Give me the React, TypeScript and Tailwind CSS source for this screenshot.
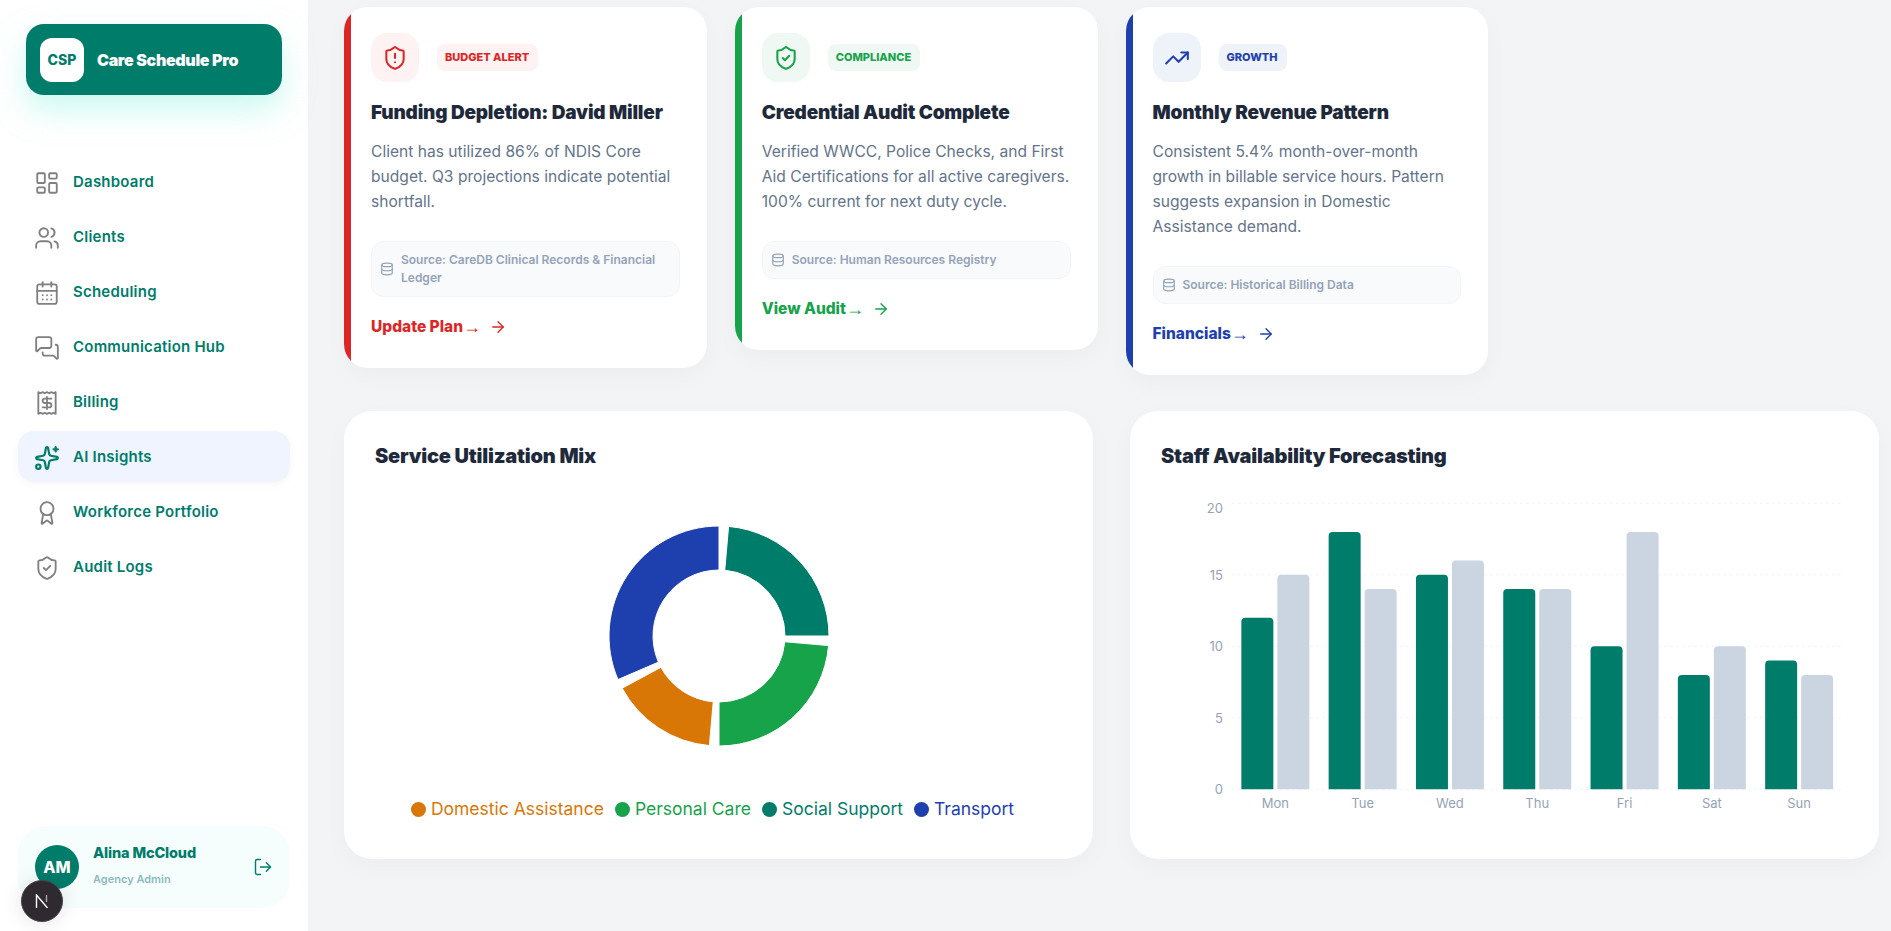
import {
  ArrowRight,
  Award,
  CalendarDays,
  Database,
  LayoutDashboard,
  LogOut,
  MessagesSquare,
  Receipt,
  ShieldAlert,
  ShieldCheck,
  Sparkles,
  TrendingUp,
  Users,
} from 'lucide-react';

const navItems = [
  { label: 'Dashboard', icon: LayoutDashboard },
  { label: 'Clients', icon: Users },
  { label: 'Scheduling', icon: CalendarDays },
  { label: 'Communication Hub', icon: MessagesSquare },
  { label: 'Billing', icon: Receipt },
  { label: 'AI Insights', icon: Sparkles, active: true },
  { label: 'Workforce Portfolio', icon: Award },
  { label: 'Audit Logs', icon: ShieldCheck },
];

const cards = [
  {
    badge: 'Budget Alert',
    title: 'Funding Depletion: David Miller',
    body: 'Client has utilized 86% of NDIS Core budget. Q3 projections indicate potential shortfall.',
    source: 'Source: CareDB Clinical Records & Financial Ledger',
    link: 'Update Plan',
    icon: ShieldAlert,
    bar: 'bg-[#dc2626]',
    text: 'text-[#dc2626]',
    tint: 'bg-[#fef2f2]',
  },
  {
    badge: 'Compliance',
    title: 'Credential Audit Complete',
    body: 'Verified WWCC, Police Checks, and First Aid Certifications for all active caregivers. 100% current for next duty cycle.',
    source: 'Source: Human Resources Registry',
    link: 'View Audit',
    icon: ShieldCheck,
    bar: 'bg-[#16a34a]',
    text: 'text-[#16a34a]',
    tint: 'bg-[#eff8f3]',
  },
  {
    badge: 'Growth',
    title: 'Monthly Revenue Pattern',
    body: 'Consistent 5.4% month-over-month growth in billable service hours. Pattern suggests expansion in Domestic Assistance demand.',
    source: 'Source: Historical Billing Data',
    link: 'Financials',
    icon: TrendingUp,
    bar: 'bg-[#1e40af]',
    text: 'text-[#1e40af]',
    tint: 'bg-[#eef2f9]',
  },
];

const legend = [
  { label: 'Domestic Assistance', dot: 'bg-[#d97706]', text: 'text-[#d97706]' },
  { label: 'Personal Care', dot: 'bg-[#16a34a]', text: 'text-[#16a34a]' },
  { label: 'Social Support', dot: 'bg-[#007c6b]', text: 'text-[#007c6b]' },
  { label: 'Transport', dot: 'bg-[#1e40af]', text: 'text-[#1e40af]' },
];

const slices = [
  { from: 0, to: 85, color: '#007c6b' },
  { from: 90, to: 203.33, color: '#1e40af' },
  { from: 208.33, to: 265, color: '#d97706' },
  { from: 270, to: 355, color: '#16a34a' },
];

const staffing = [
  { day: 'Mon', a: 12, b: 15 },
  { day: 'Tue', a: 18, b: 14 },
  { day: 'Wed', a: 15, b: 16 },
  { day: 'Thu', a: 14, b: 14 },
  { day: 'Fri', a: 10, b: 18 },
  { day: 'Sat', a: 8, b: 10 },
  { day: 'Sun', a: 9, b: 8 },
];

function slicePath(from: number, to: number, outer: number, inner: number, cx: number, cy: number) {
  const point = (r: number, deg: number) => {
    const rad = (deg * Math.PI) / 180;
    return `${(cx + r * Math.cos(rad)).toFixed(2)} ${(cy - r * Math.sin(rad)).toFixed(2)}`;
  };
  const large = to - from > 180 ? 1 : 0;
  return `M${point(outer, from)} A${outer} ${outer} 0 ${large} 0 ${point(outer, to)} L${point(inner, to)} A${inner} ${inner} 0 ${large} 1 ${point(inner, from)} Z`;
}

function Sidebar() {
  return (
    <aside className="w-[308px] shrink-0 bg-white flex flex-col px-[18px] pt-6 pb-[23px]">
      <div className="mx-2 h-[71px] rounded-[18px] bg-[#007c6b] flex items-center gap-[13px] px-3.5 shadow-[0_15px_30px_rgba(153,246,228,0.5)]">
        <div className="w-11 h-11 rounded-xl bg-white flex items-center justify-center text-[#007c6b] text-sm font-extrabold">
          CSP
        </div>
        <span className="text-white text-base font-black tracking-[-0.02em]">Care Schedule Pro</span>
      </div>

      <nav className="mt-[61px] flex flex-col gap-1">
        {navItems.map(({ label, icon: Icon, active }) => (
          <div
            key={label}
            className={`h-[51px] rounded-2xl flex items-center gap-[13px] px-4 pt-0.5 text-[15px] tracking-[0.015em] font-semibold text-[#007c6b] ${
              active ? 'bg-[#eff4fe] shadow-[0_2px_8px_rgba(15,23,42,0.04)]' : ''
            }`}
          >
            <Icon size={26} strokeWidth={active ? 2 : 1.7} className={active ? 'text-[#007c6b]' : 'text-[#808080]'} />
            {label}
          </div>
        ))}
      </nav>

      <div className="mt-auto h-[82px] rounded-[28px] bg-[#f5fefc] flex items-center pl-[17px] pr-[17px]">
        <div className="w-11 h-11 rounded-full bg-[#007c6b] flex items-center justify-center text-white text-base font-extrabold">
          AM
        </div>
        <div className="ml-3.5 mb-1 flex-1 flex flex-col gap-3">
          <span className="text-[14.5px] leading-4 font-extrabold tracking-[-0.01em] text-[#007c6b]">Alina McCloud</span>
          <span className="text-[11px] leading-3 font-semibold text-[#8dbcc0]">Agency Admin</span>
        </div>
        <LogOut size={20} strokeWidth={1.7} className="text-[#007c6b]" />
      </div>
    </aside>
  );
}

function InsightCard({ card }: { card: (typeof cards)[number] }) {
  const Icon = card.icon;
  return (
    <div className="flex bg-white rounded-3xl overflow-hidden shadow-[0_8px_24px_rgba(15,23,42,0.03)]">
      <div className={`w-[7px] shrink-0 ${card.bar}`} />
      <div className="flex-1 min-w-0 pl-5 pr-[27px] pt-[26px] pb-[31px]">
        <div className="flex items-center gap-[18px]">
          <div className={`w-12 h-[49px] rounded-2xl ${card.tint} flex items-center justify-center ${card.text}`}>
            <Icon size={26} strokeWidth={1.9} />
          </div>
          <span className={`h-[27px] pl-2 pr-[9px] rounded-lg ${card.tint} ${card.text} flex items-center text-[11px] font-extrabold uppercase`}>
            {card.badge}
          </span>
        </div>
        <h3 className="mt-[17px] text-[19px] leading-[27px] font-black text-[#1e293b] tracking-[-0.01em]">{card.title}</h3>
        <p className="mt-[13px] -mr-2 text-[15.6px] leading-[25px] text-[#64748b]">{card.body}</p>
        <div className="mt-[27px] rounded-xl bg-[#f8fafc] border border-[#f1f5f9] flex items-center gap-[7px] px-2 py-[9px] text-xs leading-[18px] font-semibold text-[#94a3b8]">
          <Database size={14} className="shrink-0" />
          <span>{card.source}</span>
        </div>
        <div className={`mt-5 flex items-center gap-2 text-[15.5px] leading-5 font-extrabold ${card.text}`}>
          <span className="flex items-center">
            {card.link}
            <span className="font-['Liberation_Sans'] font-normal text-lg leading-5">→</span>
          </span>
          <ArrowRight size={18} strokeWidth={1.8} />
        </div>
      </div>
    </div>
  );
}

function DonutChart() {
  return (
    <svg width="240" height="240" viewBox="0 0 240 240" className="mx-auto block">
      {slices.map((s) => (
        <path key={s.from} d={slicePath(s.from, s.to, 110, 66, 120, 120)} fill={s.color} stroke="#fff" strokeWidth="1" />
      ))}
    </svg>
  );
}

function StaffChart() {
  const left = 71.7;
  const band = 87.3;
  const y = (v: number) => 319.3 - v * 14.3;
  return (
    <svg width="688" height="345" viewBox="0 0 688 345" className="block">
      {[0, 5, 10, 15, 20].map((v) => (
        <g key={v}>
          <line x1={left} x2={left + band * 7} y1={y(v)} y2={y(v)} stroke="#f1f5f9" strokeDasharray="3 3" />
          <text x={63} y={v === 20 ? y(v) + 10 : y(v) + 5} textAnchor="end" fontSize="13" fill="#94a3b8">
            {v}
          </text>
        </g>
      ))}
      {staffing.map((d, i) => {
        const x = left + band * i + 9.65;
        return (
          <g key={d.day}>
            <path d={`M${x} ${y(0)}V${y(d.a) + 4}a4 4 0 0 1 4 -4h24a4 4 0 0 1 4 4V${y(0)}Z`} fill="#007c6b" />
            <path d={`M${x + 36} ${y(0)}V${y(d.b) + 4}a4 4 0 0 1 4 -4h24a4 4 0 0 1 4 4V${y(0)}Z`} fill="#cbd5e1" />
            <text x={left + band * (i + 0.5)} y={337.5} textAnchor="middle" fontSize="13" fill="#94a3b8">
              {d.day}
            </text>
          </g>
        );
      })}
    </svg>
  );
}

export default function App() {
  return (
    <div className="relative h-screen w-full flex overflow-hidden bg-[#f3f4f6] font-['Inter',sans-serif]">
      <Sidebar />

      <main className="flex-1 min-w-0 pt-[7px] pl-9 pr-3">
        <div className="grid grid-cols-4 gap-7 items-start">
          {cards.map((card) => (
            <InsightCard key={card.title} card={card} />
          ))}
        </div>

        <div className="mt-9 grid grid-cols-2 gap-[37px]">
          <section className="h-[448px] bg-white rounded-[28px] pt-[31px] px-[31px] shadow-[0_8px_24px_rgba(15,23,42,0.03)]">
            <h3 className="text-xl leading-7 font-black text-[#1e293b] tracking-[-0.01em]">Service Utilization Mix</h3>
            <div className="mt-[46px]">
              <DonutChart />
            </div>
            <div className="mt-[41px] mr-3 flex items-center justify-center gap-[11px] text-[17.5px] leading-6">
              {legend.map((item) => (
                <span key={item.label} className={`flex items-center gap-[5px] ${item.text}`}>
                  <span className={`w-[15px] h-[15px] rounded-full ${item.dot}`} />
                  {item.label}
                </span>
              ))}
            </div>
          </section>

          <section className="h-[448px] bg-white rounded-[28px] pt-[31px] px-[31px] shadow-[0_8px_24px_rgba(15,23,42,0.03)]">
            <h3 className="text-xl leading-7 font-black text-[#1e293b] tracking-[-0.01em]">Staff Availability Forecasting</h3>
            <div className="-ml-[1px]">
              <StaffChart />
            </div>
          </section>
        </div>
      </main>

      {/* dev tools badge */}
      <div className="absolute left-[21px] top-[880px] w-[42px] h-[42px] rounded-full bg-[#2f2a30] border border-[#4b3f4c] flex items-center justify-center shadow-[0_0_20px_rgba(0,0,0,0.12)]">
        <svg width="14" height="14" viewBox="0 0 14 14" fill="none" stroke="#fff" strokeWidth="1.4">
          <path d="M1.5 14V1l11 13" />
          <path d="M11.5 1v7" stroke="#a9a6ab" />
        </svg>
      </div>
    </div>
  );
}
